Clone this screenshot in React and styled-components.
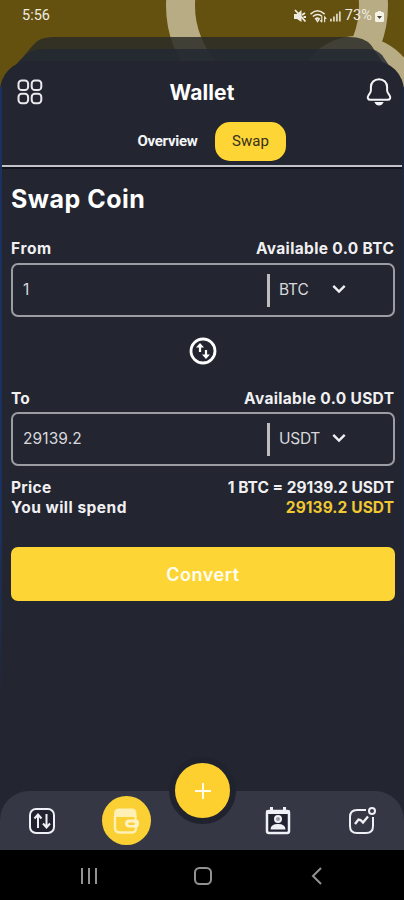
import styled, { createGlobalStyle } from 'styled-components';
import { useState } from 'react';

const GlobalStyle = createGlobalStyle`
  * {
    box-sizing: border-box;
  }
  body {
    margin: 0;
    background: #000;
    font-family: Inter, "Liberation Sans", sans-serif;
  }
  button, input {
    font: inherit;
    color: inherit;
    background: none;
    border: none;
    padding: 0;
    margin: 0;
  }
  svg {
    display: block;
  }
`

const Phone = styled.div`
  position: relative;
  width: 404px;
  height: 900px;
  display: flex;
  flex-direction: column;
  overflow: hidden;
  background: #65510f;
`

// decoration that lies behind the sheet
const Backdrop = styled.svg`
  position: absolute;
  top: 0;
  left: 0;
`

const StatusBar = styled.div`
  position: relative;
  height: 61px;
  flex: none;
  display: flex;
  justify-content: space-between;
  padding: 7px 20px 0 22px;
  font-family: Roboto, sans-serif;
  font-size: 14.5px;
  line-height: 18px;
  color: #eeebe0;
`

const StatusIcons = styled.div`
  display: flex;
  align-items: center;
  height: 18px;
  gap: 3px;
`

const Percent = styled.span`
  letter-spacing: 0.1px;
  margin-left: 1px;
`

const Sheet = styled.main`
  position: relative;
  flex: 1;
  display: flex;
  flex-direction: column;
  background: #232530;
  border-radius: 30px 30px 0 0;
  color: #f2f2f4;
`

const Edge = styled.i`
  position: absolute;
  top: 26px;
  ${props => props.right ? 'right: 0' : 'left: 0'};
  width: 2px;
  height: 620px;
  background: linear-gradient(${props => props.right ? '#1e2740, #1e2740 70%' : '#1b315f, #1b315f 70%'}, #232530);
`

const Header = styled.header`
  height: 61px;
  display: grid;
  grid-template-columns: 40px 1fr 40px;
  align-items: center;
  justify-items: center;
  padding: 1px 5px 0 10px;
`

const Title = styled.h1`
  margin: 1px 5px 0 0;
  font-size: 21px;
  line-height: 24px;
  font-weight: 700;
  color: #fff;
  letter-spacing: 0.1px;
`

const Tabs = styled.nav`
  height: 43px;
  display: flex;
  gap: 17px;
  padding-left: 137px;
`

const Tab = styled.button`
  height: 39px;
  width: ${props => props.active ? '71px' : '61px'};
  border-radius: 15px;
  font-family: Roboto, sans-serif;
  font-size: 15px;
  font-weight: ${props => props.active ? 400 : 700};
  letter-spacing: ${props => props.active ? '0px' : '-0.3px'};
  padding-bottom: 2px;
  background: ${props => props.active ? '#fdd535' : 'transparent'};
  color: ${props => props.active ? '#34301f' : '#f5f5f6'};
`

const Line = styled.div`
  height: 2px;
  margin-bottom: 17px;
  background: #c2c3c8;
  box-shadow: 0 2px 0 #12131d;
`

const Content = styled.section`
  flex: 1;
  padding: 0 9px 0 11px;
  display: flex;
  flex-direction: column;
`

const H2 = styled.h2`
  margin: -1px 0 23px;
  font-size: 25px;
  line-height: 32px;
  font-weight: 700;
  color: #fff;
  letter-spacing: 0.5px;
`

const Row = styled.div`
  display: flex;
  justify-content: space-between;
  height: 20px;
  padding: 0 1px 0 0;
  align-items: center;
  font-size: 15.5px;
  font-weight: 700;
  white-space: nowrap;
`

const Text = styled.span`
  letter-spacing: ${props => props.space || 0}px;
  margin-right: ${props => -(props.space || 0)}px;
  color: ${props => props.gold ? '#efc832' : '#f0f0f2'};
`

const Field = styled.div`
  height: 54px;
  margin-top: ${props => props.gap}px;
  display: flex;
  align-items: center;
  border: 2px solid #9c9da3;
  border-radius: 7px;
  font-size: 15.5px;
  color: #d8d8dc;
`

const Amount = styled.input`
  width: 254px;
  padding-left: 10px;
  padding-bottom: 2px;
  outline: none;
  letter-spacing: 0.1px;
`

const Coin = styled.button`
  height: 33px;
  width: 79px;
  display: flex;
  align-items: center;
  justify-content: space-between;
  border-left: 3px solid #bdbdbd;
  padding: 0 0 2px 9px;
  letter-spacing: ${props => props.wide ? '-0.3px' : '-0.2px'};
`

const SwapButton = styled.button`
  width: 30px;
  height: 30px;
  margin: 19px auto 22px;
`

const Prices = styled.div`
  padding-top: 11px;
`

const Convert = styled.button`
  height: 54px;
  margin-top: 30px;
  border-radius: 7px;
  background: #fdd535;
  color: #fffef4;
  font-size: 18px;
  font-weight: 600;
  letter-spacing: 0.55px;
`

const BottomNav = styled.nav`
  position: relative;
  height: 59px;
  flex: none;
  display: grid;
  grid-template-columns: 84px 84px 68px 84px 84px;
  align-items: center;
  justify-items: center;
  background: #353844;
  border-radius: 29px 29px 0 0;
  color: #eff0f6;
`

const NavItem = styled.button`
  width: 49px;
  height: 49px;
  border-radius: 50%;
  display: grid;
  place-items: center;
  background: ${props => props.active ? '#fbd034' : 'transparent'};
`

const Plus = styled.button`
  position: absolute;
  left: 169px;
  top: -34px;
  width: 67px;
  height: 67px;
  border-radius: 50%;
  border: 6px solid #20222d;
  background: #fdd02f;
  display: grid;
  place-items: center;
`

const System = styled.footer`
  position: relative;
  height: 50px;
  flex: none;
  background: #000;
  display: grid;
  grid-template-columns: 146px 81px 147px;
  padding: 2px 0 0 16px;
  align-items: center;
  justify-items: center;
`

const Chevron = () => (
  <svg width="14" height="10" viewBox="0 0 14 10" fill="none" stroke="#f0f0f2" strokeWidth="2.4">
    <path d="M1.3 1.8 7 7.5l5.7-5.7" />
  </svg>
)

const CoinField = ({ value, onChange, coin, gap }) => (
  <Field gap={gap}>
    <Amount value={value} onChange={(el) => onChange(el.target.value)} />
    <Coin wide={coin === 'USDT' ? 1 : 0}>
      <span>{coin}</span>
      <Chevron />
    </Coin>
  </Field>
)

const App = () => {
  const [from, setFrom] = useState('1')
  const [to, setTo] = useState('29139.2')
  const [tab, setTab] = useState('Swap')

  return (
    <>
      <GlobalStyle />
      <Phone>
        <Backdrop width="404" height="130" viewBox="0 0 404 130">
          <circle cx="277" cy="6" r="96.5" fill="none" stroke="#b8ac84" strokeWidth="29" />
          <circle cx="357" cy="98" r="62" fill="#b8ac84" />
          <path d="M15 67 C24 57 32 44 40 39.5 Q45 37 54 37 H350 Q364 37 371 45 L386 67V110H15Z" fill="#2a2b29" fillOpacity=".84" />
          <path d="M12 70 Q20 58 30 52 Q36 49 46 49 H368 Q376 49 382 55 L392 70V110H12Z" fill="#232832" fillOpacity=".83" />
        </Backdrop>

        <StatusBar>
          <span>5:56</span>
          <StatusIcons>
            <svg width="14" height="14" viewBox="0 0 14 14">
              <path d="M1 5h3l4.500-4v12L4 10H1z" fill="#eeebe0" />
              <path d="m2 1 10.500 11.500M9 6l3-2M10.500 8H13" stroke="#eeebe0" strokeWidth="1.800" />
            </svg>
            <svg width="17" height="14" viewBox="0 0 18 14" fill="none" stroke="#eeebe0" strokeWidth="1.600">
              <path d="M.5 5q7.500-7 15 0M3 7.500q5-4 10 0M5.500 10q2.500-2 4 0" />
              <path d="M6 10h4l-2 3zM12.500 8v5.500M10.800 11.500l1.700 2M15.500 13.500V8l1.700 2" strokeWidth="1.200" />
            </svg>
            <svg width="11" height="12" viewBox="0 0 12 12" fill="#dad3b8">
              <path d="M0 9h2v3H0zM3.300 6.500h2V12h-2zM6.500 3.500h2V12h-2zM9.700 1h2v11h-2z" />
            </svg>
            <Percent>73%</Percent>
            <svg width="9" height="13" viewBox="0 0 9 13">
              <path d="M3 1h3v1h1.500Q9 2 9 3.500v7Q9 12 7.500 12h-6Q0 12 0 10.500v-7Q0 2 1.500 2H3z" fill="#f5f2e8" />
              <path d="m2 6 2.500 3L7 6z" fill="#4b4635" />
            </svg>
          </StatusIcons>
        </StatusBar>

        <Sheet>
          <Edge />
          <Edge right={1} />
          <Header>
            <svg width="26" height="26" viewBox="0 0 26 26" fill="none" stroke="#e9e9ed" strokeWidth="2">
              <rect x="1.500" y="1.500" width="9.600" height="9.600" rx="3.200" />
              <rect x="14.700" y="1.500" width="9.600" height="9.600" rx="3.200" />
              <rect x="1.500" y="14.700" width="9.600" height="9.600" rx="3.200" />
              <rect x="14.700" y="14.700" width="9.600" height="9.600" rx="3.200" />
            </svg>
            <Title>Wallet</Title>
            <svg width="26" height="30" viewBox="0 0 26 30" fill="none" stroke="#f5f5f8" strokeWidth="2">
              <path d="M13 2.200C8 2.200 4.900 5.800 4.900 10v3.200c0 1.200-.4 2.300-1.300 3.500l-1.200 1.800c-1.500 2.300-.4 4.300 2 4.300h17.200c2.400 0 3.500-2 2-4.300l-1.200-1.800c-.9-1.200-1.300-2.300-1.300-3.500V10c0-4.200-3.100-7.800-8.100-7.800z" />
              <path d="M8.300 25h9.400q-1.700 3.500-4.700 3.500T8.300 25z" fill="#f5f5f8" stroke="none" />
            </svg>
          </Header>
          <Tabs>
            {['Overview', 'Swap'].map((el) => (
              <Tab key={el} active={tab === el ? 1 : 0} onClick={() => setTab(el)}>{el}</Tab>
            ))}
          </Tabs>
          <Line />
          <Content>
            <H2>Swap Coin</H2>
            <Row>
              <Text space={0.6}>From</Text>
              <Text space={0.35}>Available 0.0 BTC</Text>
            </Row>
            <CoinField value={from} onChange={setFrom} coin="BTC" gap={5} />
            <SwapButton>
              <svg width="30" height="30" viewBox="0 0 30 30" fill="none" stroke="#fff" strokeWidth="2.800">
                <circle cx="15" cy="15" r="12" />
                <path d="M12 16V10M18 14v6" strokeWidth="2.200" />
                <path d="m12 7 4 4.500H8zM18 23l-4-4.500h8z" fill="#fff" stroke="none" />
              </svg>
            </SwapButton>
            <Row>
              <Text>To</Text>
              <Text space={0.33}>Available 0.0 USDT</Text>
            </Row>
            <CoinField value={to} onChange={setTo} coin="USDT" gap={4} />
            <Prices>
              <Row>
                <Text space={0.3}>Price</Text>
                <Text>1 BTC = 29139.2 USDT</Text>
              </Row>
              <Row>
                <Text space={0.5}>You will spend</Text>
                <Text gold={1} space={0.08}>29139.2 USDT</Text>
              </Row>
            </Prices>
            <Convert>Convert</Convert>
          </Content>
          <BottomNav>
            <NavItem>
              <svg width="28" height="28" viewBox="0 0 28 28" fill="none" stroke="currentColor" strokeWidth="2">
                <rect x="2" y="2" width="24" height="24" rx="6" fill="#20222f" />
                <path d="M10 21V8M6.500 11.500 10 7.500l3.500 4M18.500 7v13M15 16.500l3.500 4 3.500-4" />
              </svg>
            </NavItem>
            <NavItem active={1}>
              <svg width="28" height="28" viewBox="0 0 28 28">
                <path d="M2 7Q2 1.500 7 1.500h13q4.500 0 4.500 5.500v3H2z" fill="#fff0b5" />
                <path d="M3 9v12q0 4.500 4.500 4.500H20q4 0 4-4.500v-2" fill="none" stroke="#fff0b5" strokeWidth="2.400" />
                <path d="M23.500 9v5" stroke="#fff0b5" strokeWidth="2" />
                <path d="M17.500 12.500H24q3 0 3 4t-3 4h-6.500q-4.500 0-4.500-4t4.500-4z" fill="#fff3c6" />
                <path d="M17.500 16.800h4" stroke="#fbd034" strokeWidth="2.600" strokeLinecap="round" />
              </svg>
            </NavItem>
            <span />
            <NavItem>
              <svg width="28" height="30" viewBox="0 0 28 30">
                <rect x="3" y="5" width="22" height="22" rx="2" fill="#20222f" stroke="currentColor" strokeWidth="2.500" />
                <path d="M2 4.500h24V8H2zM6 1h3v5H6zM19 1h3v5h-3z" fill="currentColor" />
                <circle cx="14" cy="13" r="3" fill="#9798a0" stroke="currentColor" strokeWidth="2" />
                <path d="M6.500 23.500q0-5.500 7.500-5.500t7.500 5.500z" fill="currentColor" />
              </svg>
            </NavItem>
            <NavItem>
              <svg width="30" height="30" viewBox="0 0 30 30" fill="none" stroke="currentColor" strokeWidth="2">
                <path d="M19 4H10Q3 4 3 11v9q0 7 7 7h9q7 0 7-7v-9" />
                <path d="m8 18 3.500-4.500 2 .5 2.500 2.500 5-6" strokeWidth="2.400" />
                <circle cx="25" cy="5" r="3" />
              </svg>
            </NavItem>
            <Plus>
              <svg width="18" height="18" viewBox="0 0 18 18" stroke="#fffdec" strokeWidth="2"><path d="M9 1v16M1 9h16" /></svg>
            </Plus>
          </BottomNav>
          <System>
            <svg width="18" height="18" viewBox="0 0 18 18" stroke="#929292" strokeWidth="2"><path d="M2 1v16M9 1v16M16 1v16" /></svg>
            <svg width="20" height="20" viewBox="0 0 20 20" fill="none" stroke="#929292" strokeWidth="2"><rect x="2" y="2" width="16" height="16" rx="4.500" /></svg>
            <svg width="12" height="20" viewBox="0 0 12 20" fill="none" stroke="#929292" strokeWidth="2"><path d="m10 2-8 8 8 8" /></svg>
          </System>
        </Sheet>
      </Phone>
    </>
  )
}

export default App
